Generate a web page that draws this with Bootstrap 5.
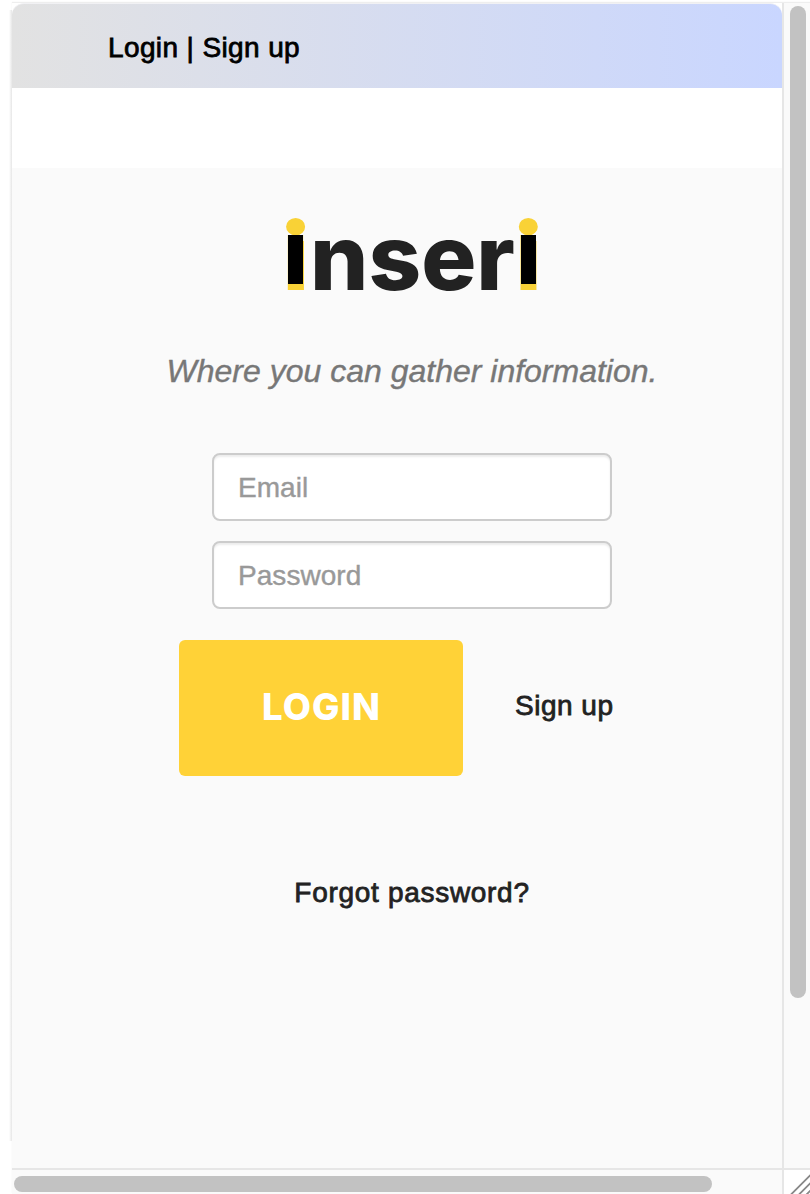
<!DOCTYPE html>
<html lang="en">
<head>
<meta charset="utf-8">
<title>inseri</title>
<link rel="stylesheet" href="https://cdn.jsdelivr.net/npm/bootstrap@5.3.0/dist/css/bootstrap.min.css">
<style>
body{font-family:"Liberation Sans",Arial,sans-serif;font-size:28px;line-height:40px;color:#222;background:#fff}
.window{height:1194px;padding:3px 0 0 12px}
.window-edge{left:9px;top:10px;width:3px;height:1131px;background:linear-gradient(90deg,#fff,#e6e6e6)}
.frame{display:grid;grid-template-columns:770px 28px;grid-template-rows:1165px 26px;box-shadow:0 -1px 1px #eee}
.topbar{height:85px;padding:4px 0 0 96px;background:linear-gradient(90deg,#e2e2e2,#c9d6ff);border-radius:12px 12px 0 0;border-top:1px solid #f1f1f4}
.heavy{-webkit-text-stroke:.8px currentColor}
.heavy,.heavy a{color:inherit;text-decoration:none}
.topbar .heavy{color:#000;letter-spacing:.38px}
.content{margin-top:80px;height:1000px;padding-left:30px;background:#fafafa}
.brand{width:280px;height:122px;margin-top:28px;overflow:visible}
.tagline{font-size:32px;font-style:italic;color:#777;margin-top:33px;-webkit-text-stroke:.4px #777}
.fields{width:400px;margin-top:62px;gap:20px}
.fields .form-control{height:68px;border:2px solid #ccc;border-radius:8px;padding:2px 24px 0;font-size:28px;letter-spacing:.05px;box-shadow:inset 0 2px 2px rgba(0,0,0,.075)}
.fields .form-control::placeholder{color:#999;-webkit-text-stroke:.4px #999}
.actions{margin:31px 0 0 137px;height:136px}
.btn-login{width:284px;height:136px;background:#ffd237;border:0;border-radius:6px;padding:0 0 2px 1px;color:#fff;font:800 36.5px Inter,sans-serif;letter-spacing:1.1px}
.btn-login:hover{background:#f5c623;color:#fff}
.signup{margin-left:52px;margin-top:-4px;letter-spacing:.5px}
.forgot{margin-top:97px;letter-spacing:.7px}
.track-y{background:#fafafa;border-left:2px solid #e6e6e6;padding:3px 0 0 6px}
.thumb-y{width:16px;height:992px;border-radius:8px;background:#c2c2c2}
.track-x{background:#fafafa;border-top:2px solid #e6e6e6;padding:6px 0 0 2px}
.thumb-x{width:698px;height:16px;border-radius:8px;background:#c2c2c2}
.corner{border-left:2px solid #e6e6e6;border-top:2px solid #e6e6e6}
</style>
<script src="https://cdn.jsdelivr.net/npm/bootstrap@5.3.0/dist/js/bootstrap.bundle.min.js"></script>
</head>
<body class="overflow-hidden">
<div class="window position-relative overflow-hidden">
  <div class="window-edge position-absolute"></div>
  <div class="frame">
    <main>
      <nav class="topbar d-flex align-items-center"><div class="heavy"><a href="#">Login</a> | <a href="#">Sign up</a></div></nav>
      <section class="content d-flex flex-column align-items-center">
        <svg class="brand flex-shrink-0" viewBox="272 196 280 122" role="img" aria-label="inseri">
          <g font-family="Inter, sans-serif" font-weight="800" font-size="90">
            <text x="283.5" y="290" fill="#f9d236">i</text>
            <text x="310" y="290" fill="#222" textLength="205" lengthAdjust="spacingAndGlyphs">nser</text>
            <text x="516" y="290" fill="#f9d236">i</text>
          </g>
          <g fill="#f9d236">
            <ellipse cx="295.6" cy="226.7" rx="9.5" ry="8.7"/><ellipse cx="528.3" cy="226.7" rx="9.5" ry="8.7"/>
            <path d="M287.8 235H303.2V290H287.8zM520.5 235H536V290H520.5z"/>
          </g>
          <path d="M288 235H303V284H288zM521 235H536V284H521z"/>
        </svg>
        <div class="tagline">Where you can gather information.</div>
        <div class="fields d-flex flex-column">
          <input class="form-control" type="email" placeholder="Email">
          <input class="form-control" type="password" placeholder="Password">
        </div>
        <div class="actions d-flex align-items-center align-self-start">
          <button class="btn btn-login">LOGIN</button>
          <a class="signup heavy" href="#">Sign up</a>
        </div>
        <a class="forgot heavy" href="#">Forgot password?</a>
      </section>
    </main>
    <div class="track-y"><div class="thumb-y"></div></div>
    <div class="track-x"><div class="thumb-x"></div></div>
    <div class="corner"><svg class="d-block" width="26" height="24" fill="none" stroke="#888" stroke-width="1.8"><path d="M5.5 26L29.5 2M13.5 26L37.5 2M21 26L45 2"/></svg></div>
  </div>
</div>
</body>
</html>
